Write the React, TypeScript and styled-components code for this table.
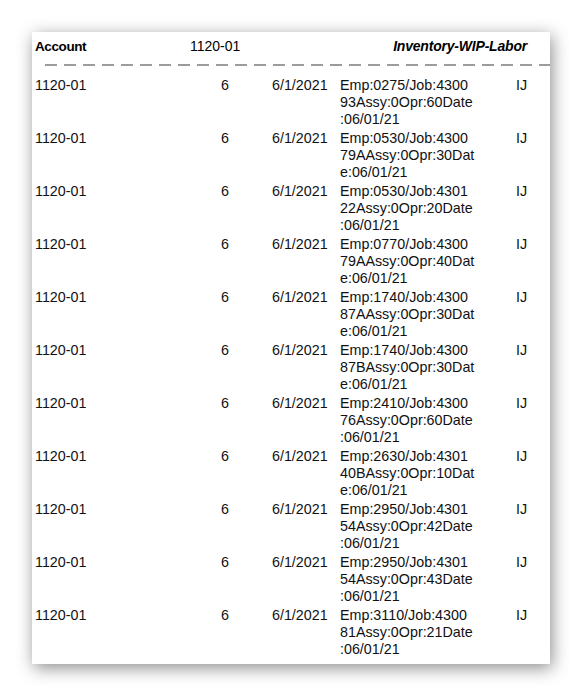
import React from "react";
import styled, { createGlobalStyle } from "styled-components";

const GlobalStyle = createGlobalStyle`
  html, body { margin: 0; padding: 0; background: #ffffff; }
  body { font-family: "Liberation Sans", Arial, sans-serif; color: #111; }
`;

const Page = styled.div`
  padding: 32px 32px 32px 32px;
  width: 518px;
`;

const Card = styled.div`
  background: #ffffff;
  width: 518px;
  box-sizing: border-box;
  padding: 6px 23px 4px 3px;
  box-shadow: 2px 4px 16px rgba(0, 0, 0, 0.45);
  overflow: hidden;
`;

const Header = styled.div`
  display: grid;
  grid-template-columns: 155px 1fr auto;
  align-items: center;
  height: 17px;
  line-height: 17px;
  color: #000;
`;

const HeaderLabel = styled.span`
  font-size: 13.5px;
  font-weight: bold;
  letter-spacing: -0.4px;
`;

const HeaderValue = styled.span`
  font-size: 14px;
`;

const HeaderTitle = styled.span`
  font-size: 14px;
  font-weight: bold;
  font-style: italic;
  letter-spacing: -0.2px;
`;

const Dashes = styled.div`
  height: 2px;
  margin: 9px -23px 11px 10px;
  background: repeating-linear-gradient(
    to right,
    #9c9c9c 0 12px,
    transparent 12px 19px
  );
`;

const Row = styled.div`
  display: grid;
  grid-template-columns: 155px 39px 111px 176px auto;
  font-size: 14.3px;
  line-height: 17px;
  padding-bottom: 2px;
  color: #111;
`;

const Cell = styled.div<{ $align?: "left" | "right"; $pad?: number }>`
  text-align: ${(p) => p.$align ?? "left"};
  padding-left: ${(p) => p.$pad ?? 0}px;
  white-space: nowrap;
`;

const Line = styled.span`
  display: block;
`;

const descriptions = [
  "Emp:0275/Job:430093Assy:0Opr:60Date:06/01/21",
  "Emp:0530/Job:430079AAssy:0Opr:30Date:06/01/21",
  "Emp:0530/Job:430122Assy:0Opr:20Date:06/01/21",
  "Emp:0770/Job:430079AAssy:0Opr:40Date:06/01/21",
  "Emp:1740/Job:430087AAssy:0Opr:30Date:06/01/21",
  "Emp:1740/Job:430087BAssy:0Opr:30Date:06/01/21",
  "Emp:2410/Job:430076Assy:0Opr:60Date:06/01/21",
  "Emp:2630/Job:430140BAssy:0Opr:10Date:06/01/21",
  "Emp:2950/Job:430154Assy:0Opr:42Date:06/01/21",
  "Emp:2950/Job:430154Assy:0Opr:43Date:06/01/21",
  "Emp:3110/Job:430081Assy:0Opr:21Date:06/01/21",
];

const wrap = (s: string) => [s.slice(0, 17), s.slice(17, 35), s.slice(35)];

export default function App() {
  return (
    <>
      <GlobalStyle />
      <Page>
        <Card>
          <Header>
            <HeaderLabel>Account</HeaderLabel>
            <HeaderValue>1120-01</HeaderValue>
            <HeaderTitle>Inventory-WIP-Labor</HeaderTitle>
          </Header>
          <Dashes />
          {descriptions.map((d, i) => (
            <Row key={i}>
              <Cell>1120-01</Cell>
              <Cell $align="right">6</Cell>
              <Cell $pad={43}>6/1/2021</Cell>
              <Cell>
                {wrap(d).map((l, j) => (
                  <Line key={j}>{l}</Line>
                ))}
              </Cell>
              <Cell>IJ</Cell>
            </Row>
          ))}
        </Card>
      </Page>
    </>
  );
}
